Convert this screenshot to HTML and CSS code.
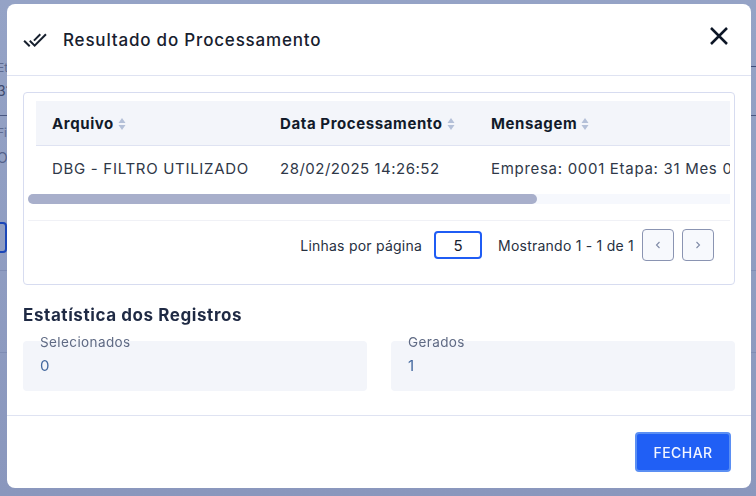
FILE: index.html
```html
<!DOCTYPE html>
<html lang="pt-BR">
<head>
<meta charset="utf-8">
<title>Resultado do Processamento</title>
<link rel="stylesheet" href="styles.css">
</head>
<body>
<div class="page-behind">
  <span class="bg-text bg-et">Et</span>
  <span class="bg-text bg-31">31</span>
  <span class="bg-text bg-ri">Fi</span>
  <span class="bg-text bg-o">O</span>
  <i class="bg-input"></i>
  <i class="bg-line l1"></i>
  <i class="bg-line l2"></i>
  <i class="bg-line l3"></i>
  <i class="bg-line l4"></i>
</div>
<div class="overlay">
  <section class="modal">
    <header class="modal-head">
      <svg class="check-icon" width="24" height="24" viewBox="0 0 24 24" fill="#17202e"><path d="M18 7l-1.410-1.410-6.340 6.340 1.410 1.410L18 7zm4.240-1.410L11.660 16.170 7.480 12l-1.410 1.410L11.660 19l12-12-1.420-1.410zM.41 13.410L6 19l1.410-1.410L1.830 12 .41 13.410z"/></svg>
      <h1 class="modal-title">Resultado do Processamento</h1>
      <svg class="close-icon" width="18" height="18" viewBox="0 0 18 18" fill="none" stroke="#0d1626" stroke-width="2.500"><path d="M1 1l16 16M17 1L1 17"/></svg>
    </header>
    <div class="modal-body">
      <div class="panel">
        <div class="table-clip">
          <div class="table">
            <div class="row head">
              <div class="cell c1">Arquivo<svg class="sort" width="8" height="12" viewBox="0 0 8 12"><path d="M4 0l3.500 5h-7zM4 12L.5 7h7z"/></svg></div>
              <div class="cell c2">Data Processamento<svg class="sort" width="8" height="12" viewBox="0 0 8 12"><path d="M4 0l3.500 5h-7zM4 12L.5 7h7z"/></svg></div>
              <div class="cell c3">Mensagem<svg class="sort" width="8" height="12" viewBox="0 0 8 12"><path d="M4 0l3.500 5h-7zM4 12L.5 7h7z"/></svg></div>
            </div>
            <div class="row data">
              <div class="cell c1 wide">DBG - FILTRO UTILIZADO</div>
              <div class="cell c2">28/02/2025 14:26:52</div>
              <div class="cell c3 wide">Empresa: 0001 Etapa: 31 Mes 02</div>
            </div>
          </div>
        </div>
        <div class="scroll-track"><div class="scroll-thumb"></div></div>
        <div class="pager">
          <span class="pager-label">Linhas por página</span>
          <span class="page-size">5</span>
          <span class="pager-info">Mostrando 1 - 1 de 1</span>
          <button class="page-btn"><svg width="6" height="8" viewBox="0 0 6 8" fill="none" stroke="#7f8aa6" stroke-width="1.100"><path d="M4.500 1L1.500 4l3 3"/></svg></button>
          <button class="page-btn"><svg width="6" height="8" viewBox="0 0 6 8" fill="none" stroke="#7f8aa6" stroke-width="1.100"><path d="M1.500 1l3 3-3 3"/></svg></button>
        </div>
      </div>
      <h2 class="section-title">Estatística dos Registros</h2>
      <div class="stats">
        <div class="stat"><span class="stat-label">Selecionados</span><span class="stat-value">0</span></div>
        <div class="stat"><span class="stat-label">Gerados</span><span class="stat-value">1</span></div>
      </div>
    </div>
    <footer class="modal-foot">
      <button class="primary">FECHAR</button>
    </footer>
  </section>
</div>
</body>
</html>
```
FILE: styles.css
```css
* { box-sizing: border-box; }
html, body { margin: 0; height: 100%; }
body {
  font-family: "Inter", "Liberation Sans", sans-serif;
  overflow: hidden;
  background: linear-gradient(#95a3c6, #8a97bd);
  color: #17202e;
}
.page-behind { position: absolute; inset: 0; overflow: hidden; }
.bg-text { position: absolute; left: -3px; font-size: 14px; color: #5d6a90; }
.bg-et { top: 60px; font-size: 12px; }
.bg-31 { top: 82px; color: #3d4a6e; }
.bg-ri { top: 125px; font-size: 12px; }
.bg-o { top: 149px; color: #55628a; }
.bg-input { position: absolute; left: -10px; top: 222px; width: 17px; height: 31px; border: 2px solid #1c47b8; border-radius: 4px; }
.bg-line { position: absolute; height: 1px; background: #5f6d96; }
.l1 { right: 0; width: 5px; top: 66px; background: #3f4d7c; }
.l2 { left: 0; right: 0; top: 115px; background: #4a5882; }
.l3 { left: 0; right: 0; top: 270px; background: #7f8db4; }
.l4 { left: 0; right: 0; top: 352px; background: #7f8db4; }

.overlay { position: fixed; inset: 0; padding: 4px 5px 8px 7px; }
.modal {
  height: 484px;
  background: #fff;
  border-radius: 8px;
  display: flex;
  flex-direction: column;
}
.modal-head {
  height: 72px;
  flex: none;
  border-bottom: 1px solid #dfe3f2;
  display: flex;
  align-items: center;
  padding: 0 23px 0 16px;
}
.check-icon { flex: none; margin-right: 16px; }
.modal-title { flex: 1; margin: 0; font-size: 17px; font-weight: 500; letter-spacing: .81px; color: #17202e; }
.close-icon { flex: none; margin-top: -7px; }
.modal-body { flex: 1; padding: 16px 16px 0; }
.panel {
  height: 193px;
  border: 1px solid #d7dcf0;
  border-radius: 4px;
  padding: 8px 4px 0;
}
.table-clip { margin-left: 8px; overflow: hidden; }
.table { width: 900px; }
.row { display: flex; align-items: center; }
.row.head { height: 45px; background: #f3f5fa; border-bottom: 1px solid #dfe3f2; font-weight: 700; color: #121b2a; font-size: 15px; letter-spacing: .6px; }
.row.data { height: 44px; font-size: 15px; color: #2f3848; letter-spacing: .5px; }
.row.data .wide { letter-spacing: .7px; }
.cell { padding-left: 16px; white-space: nowrap; }
.c1 { width: 228px; }
.c2 { width: 211px; }
.c3 { flex: 1; }
.sort { margin-left: 4px; fill: #b4c0d8; vertical-align: -1px; }
.scroll-track { height: 10px; margin-top: 4px; background: #f6f8fd; border-radius: 5px 0 0 5px; }
.scroll-thumb { width: 509px; height: 10px; background: #a8afcb; border-radius: 5px; }
.pager {
  margin-top: 16px;
  height: 49px;
  border-top: 1px solid #f0f1f6;
  display: flex;
  align-items: center;
  justify-content: flex-end;
  padding: 0 16px 0 0;
  font-size: 14px;
  letter-spacing: .23px;
  color: #27303f;
}
.page-size {
  width: 48px;
  height: 28px;
  margin: 0 16px 0 12px;
  border: 2px solid #1f5cf4;
  border-radius: 4px;
  display: flex;
  align-items: center;
  justify-content: center;
  font-size: 15px;
  color: #17202e;
}
.page-btn {
  width: 32px;
  height: 32px;
  margin-left: 8px;
  padding: 0;
  border: 1px solid #8a94b2;
  border-radius: 4px;
  background: #f7f9fd;
  display: flex;
  align-items: center;
  justify-content: center;
}
.section-title { margin: 20px 0 0; height: 20px; line-height: 20px; font-size: 17px; font-weight: 700; letter-spacing: .58px; color: #1f2a44; }
.stats { display: flex; gap: 24px; margin-top: 16px; }
.stat { position: relative; flex: 1; height: 50px; background: #f3f5fa; border-radius: 4px; padding: 14px 17px 0; }
.stat-label { position: absolute; left: 17px; top: -7px; font-size: 13.500px; letter-spacing: .4px; color: #5f6a84; }
.stat-value { font-size: 15px; color: #44699f; }
.modal-foot {
  height: 73px;
  flex: none;
  border-top: 1px solid #dfe3f2;
  display: flex;
  align-items: flex-start;
  justify-content: flex-end;
  padding: 16px 20px 0 0;
}
.primary {
  width: 96px;
  height: 40px;
  background: #205ff5;
  border: 2px solid #5b8ff3;
  border-radius: 4px;
  color: #f2f5ff;
  font: 500 14px "Inter", "Liberation Sans", sans-serif;
  letter-spacing: .45px;
}
```
